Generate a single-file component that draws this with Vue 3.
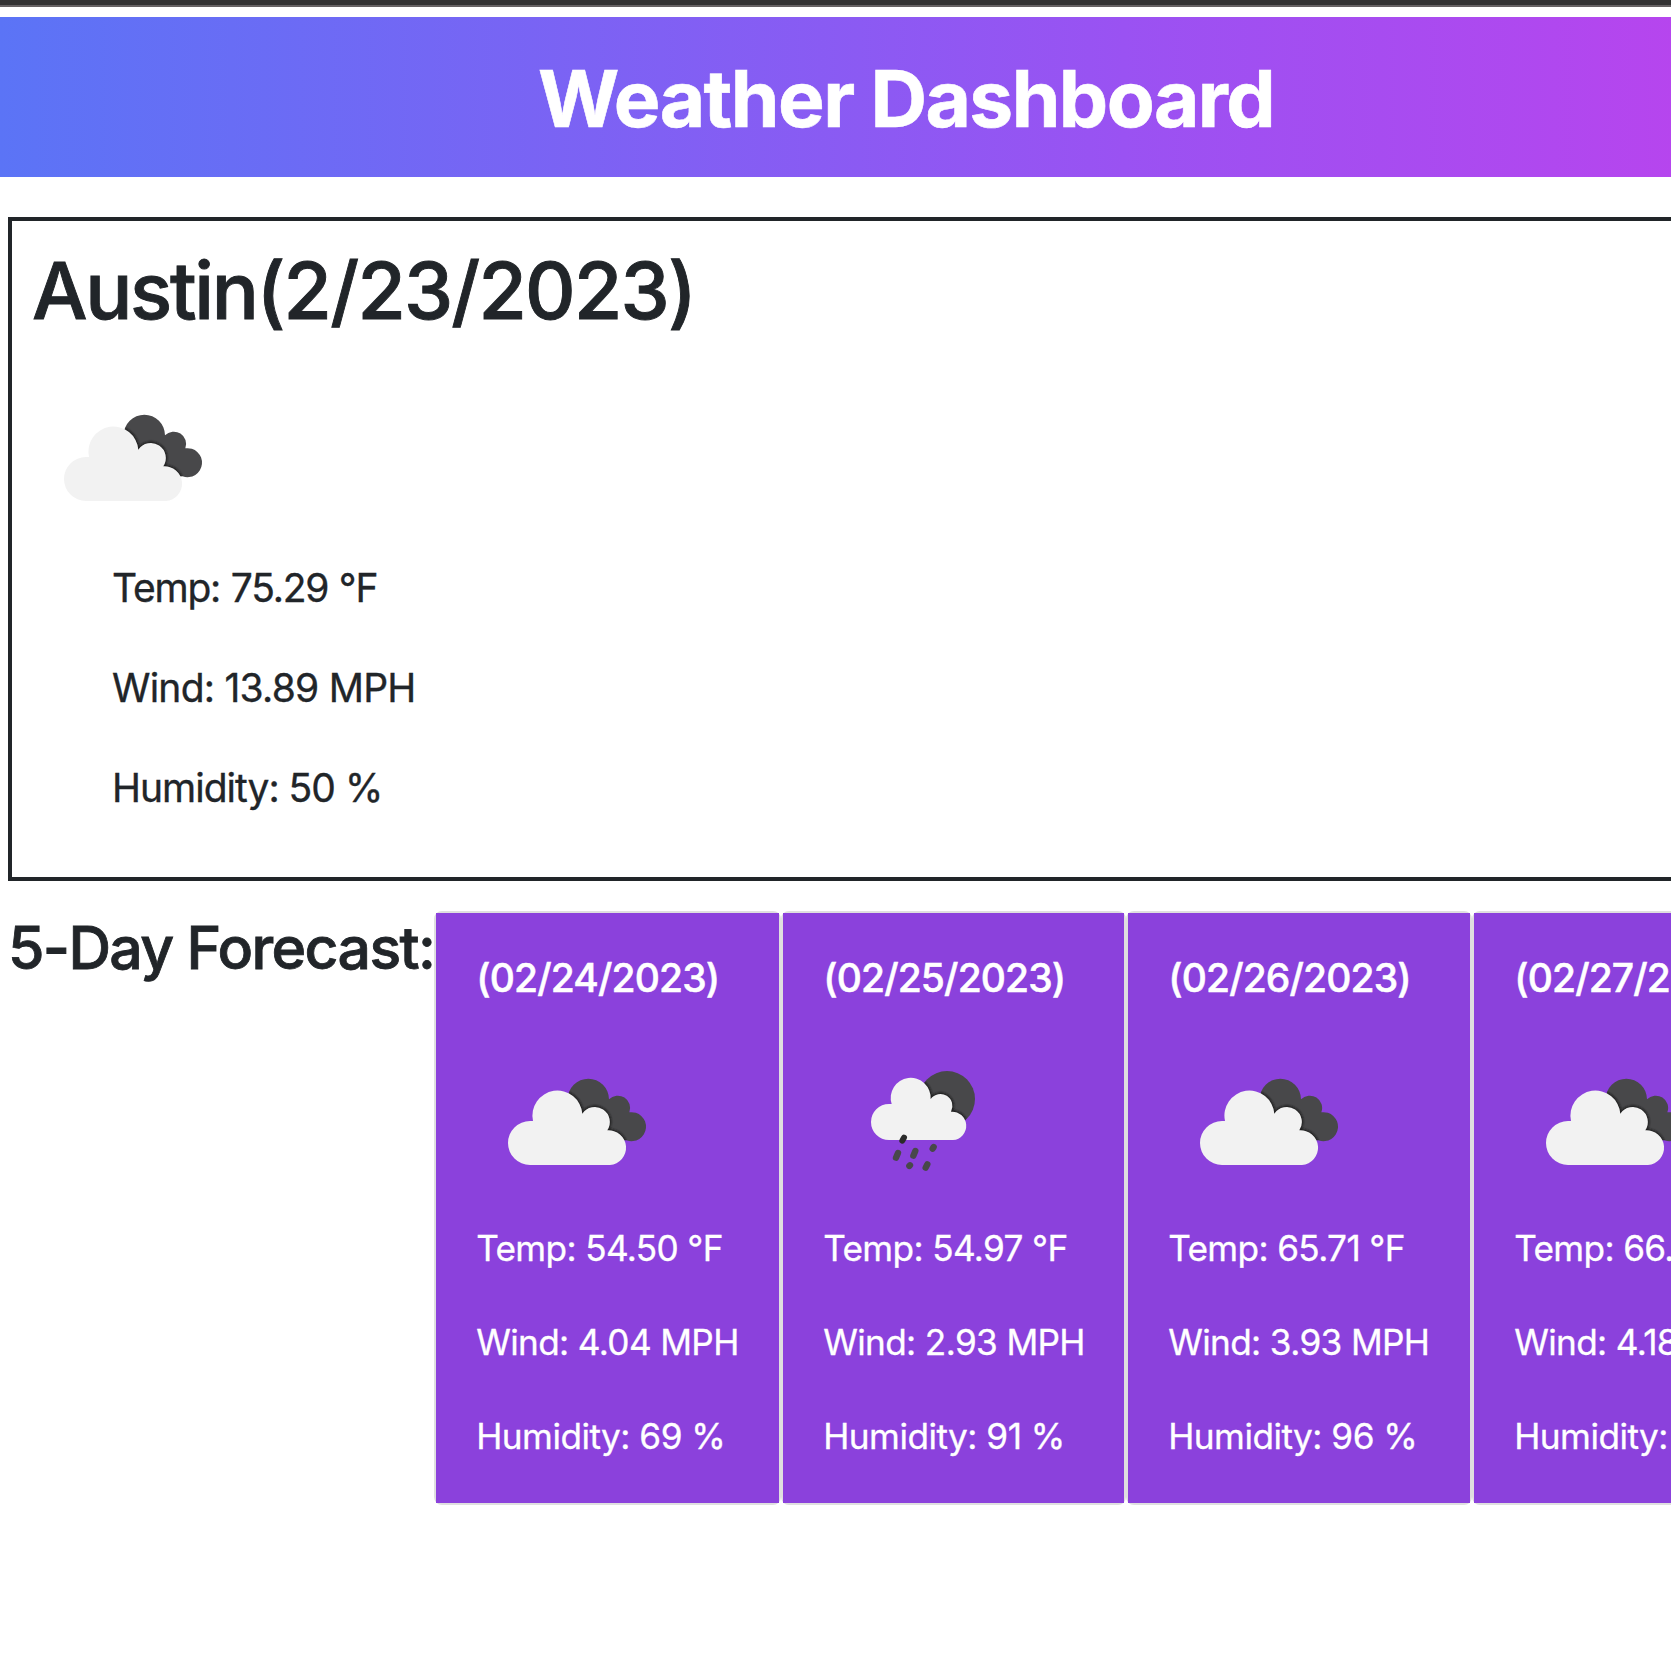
<script setup>
import { h } from 'vue'

const current = {
  city: 'Austin',
  date: '(2/23/2023)',
  temp: 'Temp: 75.29 °F',
  wind: 'Wind: 13.89 MPH',
  humidity: 'Humidity: 50 %'
}

const days = [
  { date: '(02/24/2023)', icon: 'clouds', temp: '54.50', wind: '4.04', humidity: '69' },
  { date: '(02/25/2023)', icon: 'rain', temp: '54.97', wind: '2.93', humidity: '91' },
  { date: '(02/26/2023)', icon: 'clouds', temp: '65.71', wind: '3.93', humidity: '96' },
  { date: '(02/27/2023)', icon: 'clouds', temp: '66.20', wind: '4.18', humidity: '90' }
]

const shapes = {
  clouds: {
    viewBox: '138 363 600 600',
    back: 'M413 598a62 62 0 0 1 124 0A37 37 0 0 1 598 637A43.5 43.5 0 1 1 590 721L500 720Z',
    front: 'M300 795A66 66 0 0 1 300 663L309 663A75 75 0 1 1 457 641A45 45 0 0 1 532 691A52 52 0 1 1 540 795Z',
    drops: []
  },
  rain: {
    viewBox: '129 363 600 600',
    back: 'M417 597a84 84 0 1 1 168 0a84 84 0 1 1 -168 0Z',
    front: 'M327 720A54 54 0 0 1 327 612L335 612A60 60 0 1 1 452 597A36 36 0 0 1 513 635A42.5 42.5 0 1 1 519 720Z',
    drops: [
      'M354 759L348 773', 'M406 753L400 767', 'M461 741L458 746',
      'M390 796L388 798', 'M442 793L437 803'
    ]
  }
}

const WeatherIcon = (props) => {
  const s = shapes[props.name]
  const id = 'back-' + props.name + '-' + props.uid
  return h('svg', { viewBox: s.viewBox, width: 200, height: 200, 'aria-hidden': 'true' }, [
    h('defs', [
      h('clipPath', { id }, [h('path', { d: s.back })]),
      h('filter', { id: id + '-soft' }, [h('feGaussianBlur', { stdDeviation: 2.5 })])
    ]),
    h('path', { d: s.back, fill: '#48484a' }),
    h('g', { 'clip-path': `url(#${id})` }, [
      h('path', { d: s.front, fill: '#222', stroke: '#1c1c1c', 'stroke-width': 8, filter: `url(#${id}-soft)` })
    ]),
    h('path', { d: s.front, fill: '#f2f2f2' }),
    ...s.drops.map((d) => h('path', { d, stroke: '#48484a', 'stroke-width': 19, 'stroke-linecap': 'round' })),
    s.drops.length ? h('path', { d: 'M372 713L367 722', stroke: '#2b2b2b', 'stroke-width': 18, 'stroke-linecap': 'round' }) : null
  ])
}
WeatherIcon.props = ['name', 'uid']
</script>

<template>
  <div class="viewport">
    <div class="page">
      <div class="topbar"></div>
      <header class="banner"><h1>Weather Dashboard</h1></header>
      <section class="current">
        <h2><span class="city">{{ current.city }}</span>{{ current.date }}</h2>
        <WeatherIcon class="icon" name="clouds" uid="now" />
        <ul>
          <li class="temp">{{ current.temp }}</li>
          <li>{{ current.wind }}</li>
          <li class="humidity">{{ current.humidity }}</li>
        </ul>
      </section>
      <section class="forecast">
        <h3>5-Day Forecast:</h3>
        <article v-for="(day, i) in days" :key="day.date" class="card" :class="'day-' + (i + 1)">
          <div class="body">
            <h4>{{ day.date }}</h4>
            <WeatherIcon class="icon" :name="day.icon" :uid="i" />
            <p class="temp">Temp: {{ day.temp }} °F</p>
            <p class="wind">Wind: {{ day.wind }} MPH</p>
            <p class="humidity">Humidity: {{ day.humidity }} %</p>
          </div>
        </article>
      </section>
    </div>
  </div>
</template>

<style>
body { margin: 0; background: #fff; }
</style>

<style scoped>
.viewport {
  width: 100%;
  height: 1672px;
  overflow: hidden;
  background: #fff;
  color: #212529;
  font-family: Inter, "Liberation Sans", sans-serif;
}
h1, h2, h3, h4, p, ul { margin: 0; padding: 0; font-weight: 500; white-space: nowrap; }
.page { width: 1812px; }
.topbar { box-sizing: border-box; height: 7px; background: #333; border-bottom: 2px solid #666263; }
.banner {
  box-sizing: border-box;
  height: 160px;
  margin-top: 10px;
  padding-top: 34px;
  text-align: center;
  color: #fff;
  background: linear-gradient(to right, #5b74f6, #9a52f2 62%, #bd42ed);
}
h1 { font-size: 78.4px; line-height: 96px; font-weight: 700; letter-spacing: -1.6px; -webkit-text-stroke: 0.6px; }
.current {
  box-sizing: border-box;
  height: 664px;
  margin: 40px 8px 0;
  padding: 22px 20px 0;
  border: 4px solid #212529;
}
h2 { font-size: 78.4px; line-height: 96px; letter-spacing: -1.75px; -webkit-text-stroke: 0.9px; }
.city { letter-spacing: -2.35px; }
.icon { display: block; }
.current .icon { margin-top: 18px; }
.current ul { margin: 1px 0 0 80px; list-style: none; }
.current li { margin-bottom: 40px; font-size: 39px; font-weight: 400; line-height: 60px; letter-spacing: -0.75px; -webkit-text-stroke: 0.35px; }
.current li.temp { letter-spacing: -1.2px; word-spacing: 0.8px; }
.current li.humidity { letter-spacing: -1px; }
.forecast { display: flex; align-items: flex-start; margin: 30px 0 0 8px; }
h3 { flex: 0 0 426px; font-size: 59px; line-height: 73px; letter-spacing: -1.66px; -webkit-text-stroke: 0.8px; }
.card {
  box-sizing: border-box;
  flex: 0 0 346px;
  min-width: 0;
  height: 594px;
  border: 2px solid #dfdfdf;
  border-radius: 8px;
}
.day-1 { flex-basis: 347px; }
.day-2 { flex-basis: 345px; }
.body { box-sizing: border-box; height: 590px; padding: 41px 40px 0; background: #8b41dc; color: #fff; }
h4 { font-size: 39px; line-height: 48px; letter-spacing: -0.87px; -webkit-text-stroke: 0.5px; }
.card .icon { margin-top: 19px; }
.card p { margin-bottom: 40px; font-size: 35.2px; line-height: 54px; font-weight: 400; letter-spacing: -0.65px; -webkit-text-stroke: 0.3px; }
.card .humidity { letter-spacing: -0.52px; }
</style>
